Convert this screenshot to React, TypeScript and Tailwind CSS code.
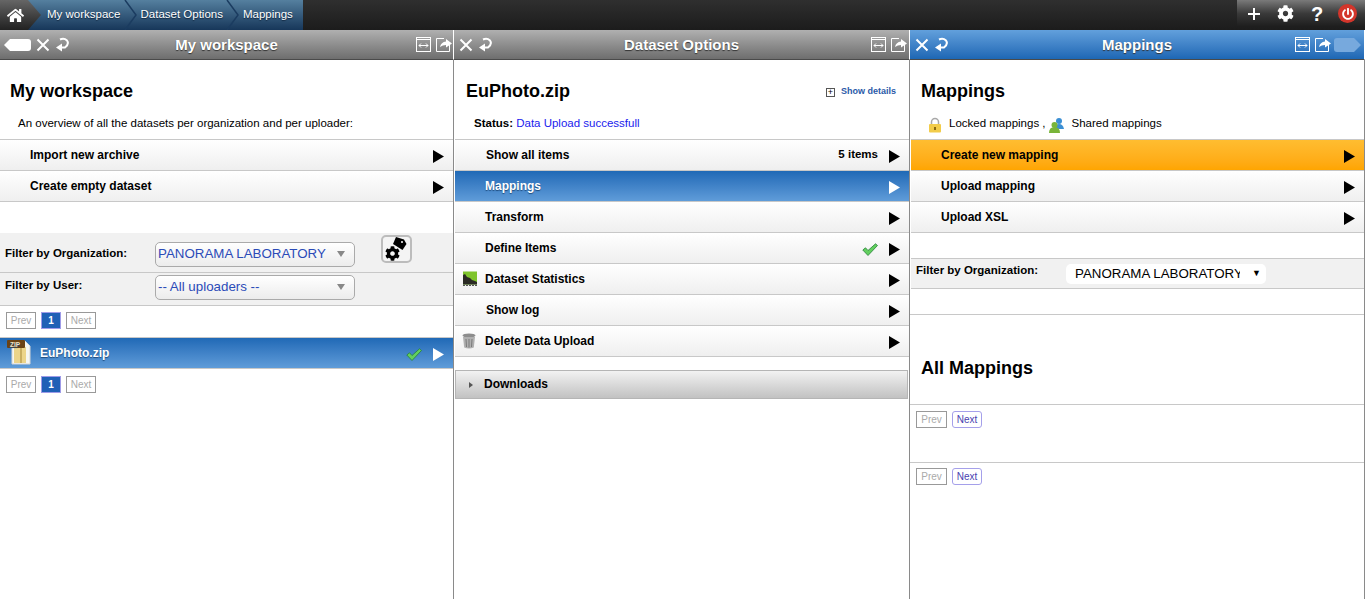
import { FaCog, FaHome, FaPowerOff } from "react-icons/fa";

const crumbs = ["My workspace", "Dataset Options", "Mappings"];

function TopBar() {
  return (
    <div className="flex h-[30px] justify-between bg-gradient-to-b from-[#2f2f2f] to-[#1c1c1c]">
      <div className="flex h-[30px] bg-gradient-to-b from-[#55809f] to-[#17375a] pr-[10px]">
        <div className="z-10 flex w-[41px] items-center bg-gradient-to-b from-[#666666] to-[#222222] pl-[7px] text-white [clip-path:polygon(0_0,28px_0,41px_50%,28px_100%,0_100%)]">
          <FaHome size={17} />
        </div>
        {crumbs.map((crumb, i) => (
          <div key={crumb} className="flex items-center">
            <span className={`text-[11.5px] text-white [text-shadow:0_1px_1px_#10263f] ${i === 0 ? "ml-[6px]" : ""}`}>{crumb}</span>
            {i < crumbs.length - 1 && (
              <svg width="20" height="30" viewBox="0 0 20 30">
                <polyline points="4,0 15,15 4,30" fill="none" stroke="#1b3c60" strokeWidth="1.5" />
              </svg>
            )}
          </div>
        ))}
      </div>
      <div className="flex h-[27px] w-[128px] items-center bg-gradient-to-b from-[#7a7a7a] via-[#3a3a3a] to-[#1d1d1d] pl-[9px] text-white">
        <svg width="14" height="14" viewBox="0 0 14 14" className="ml-[1px]">
          <path d="M7 1v12M1 7h12" stroke="#fff" strokeWidth="2" />
        </svg>
        <FaCog size={17} className="ml-[16px]" />
        <span className="ml-[17px] text-[20px] leading-none font-bold">?</span>
        <span className="ml-[15px] flex h-[19px] w-[19px] items-center justify-center rounded-full bg-[#d3352b] text-white">
          <FaPowerOff size={12} />
        </span>
      </div>
    </div>
  );
}

function TagShape({ fill }: { fill: string }) {
  return (
    <svg width="27" height="14" viewBox="0 0 27 14">
      <path d={fill === "#fff" ? "M0 7 6 1h18q3 0 3 3v6q0 3-3 3H6z" : "M0 3q0-3 3-3h17l7 7-7 7H3q-3 0-3-3z"} fill={fill} />
    </svg>
  );
}

function CloseReload() {
  return (
    <>
      <svg width="14" height="14" viewBox="0 0 14 14">
        <path d="M1.5 1.5l11 11M12.5 1.5l-11 11" stroke="#fff" strokeWidth="2" />
      </svg>
      <svg width="15" height="15" viewBox="0 0 15 15" className="ml-[5px]">
        <path d="M5 2.500Q9 .5 12 3.500 14.500 7 10 10.500H7" fill="none" stroke="#fff" strokeWidth="2" />
        <path d="M7 6.500v8l-6-4z" fill="#fff" />
      </svg>
    </>
  );
}

function SizeIcons() {
  return (
    <>
      <svg width="15" height="15" viewBox="0 0 15 15">
        <rect x="0.5" y="0.5" width="14" height="14" fill="none" stroke="#fff" />
        <path d="M0 2.500h15" stroke="#fff" />
        <path d="M3 8.500h9M3 8.500l2-2M3 8.500l2 2M12 8.500l-2-2M12 8.500l-2 2" stroke="#fff" fill="none" />
      </svg>
      <svg width="16" height="16" viewBox="0 0 16 16" className="ml-[5px]">
        <path d="M8 1.500H.5v13h13V8" fill="none" stroke="#fff" />
        <path d="M4 10q1-5 6-5.500V2l6 4.500-6 4V8q-3.500 0-6 2z" fill="#fff" />
      </svg>
    </>
  );
}

function TitleBar({ title, active, first }: { title: string; active?: boolean; first?: boolean }) {
  const pad = active ? "pr-[3px]" : first ? "pr-[1px]" : "pr-[2px]";
  return (
    <div
      className={`relative -mr-px flex h-[30px] items-center border-r border-b border-r-white border-b-[#4a4a4a] ${pad} ${
        active ? "bg-gradient-to-b from-[#62a0dc] to-[#1d67b4]" : "bg-gradient-to-b from-[#b0b0b0] to-[#6e6e6e]"
      } ${first ? "pl-[4px]" : "pl-[5px]"}`}
    >
      {first && (
        <span className="mr-[5px] flex">
          <TagShape fill="#fff" />
        </span>
      )}
      <CloseReload />
      <span className="absolute inset-x-0 mt-[1px] text-center text-[15px] font-bold text-white [text-shadow:0_1px_1px_#333333]">{title}</span>
      <span className="ml-auto flex items-center">
        <SizeIcons />
        {active && (
          <span className="ml-[3px] flex">
            <TagShape fill="#77a9dd" />
          </span>
        )}
      </span>
    </div>
  );
}

function Arrow({ white }: { white?: boolean }) {
  return (
    <svg width="11" height="13" viewBox="0 0 11 13" className="ml-[11px] mt-[2px]">
      <path d="M0 0l11 6.500L0 13z" fill={white ? "#fff" : "#000"} />
    </svg>
  );
}

function Check() {
  return (
    <svg width="16" height="13" viewBox="0 0 16 13" className="mt-[3px]">
      <path d="M.8 7l2.700-2.200 2.500 2.700L13.500.8l2 1.700L6 12.500z" fill="#62cf5e" stroke="#27803a" strokeWidth="0.8" />
    </svg>
  );
}

function StatsIcon() {
  return (
    <svg width="16" height="15" viewBox="0 0 16 15">
      <rect x="1" y="0.500" width="14" height="13" fill="#7fc42c" />
      <path d="M1 13.500V4l2-1 2 3 3 1 2 2 3 1 2 1v2.500z" fill="#2b2b24" />
      <path d="M1 14.500h14" stroke="#555555" strokeDasharray="2 1" />
    </svg>
  );
}

function BinIcon() {
  return (
    <svg width="14" height="16" viewBox="0 0 14 16">
      <ellipse cx="7" cy="2.500" rx="6.500" ry="2" fill="#8d8d8d" />
      <path d="M1 4h12l-1.200 10.500q-4.800 2-9.600 0z" fill="#b0b0b0" />
      <path d="M4 6l.5 8M7 6v8.500M10 6l-.5 8" stroke="#7a7a7a" />
    </svg>
  );
}

type RowProps = {
  label: string;
  tone?: "plain" | "blue" | "orange";
  icon?: React.ReactNode;
  end?: React.ReactNode;
  labelPad?: string;
};

function MenuRow({ label, tone = "plain", icon, end, labelPad = "pl-[30px]" }: RowProps) {
  const bg = {
    plain: "bg-gradient-to-b from-white to-[#efefef] text-black",
    blue: "bg-gradient-to-b from-[#1f69b6] to-[#5f9cd9] text-white [text-shadow:0_1px_1px_#1d4a7c]",
    orange: "bg-gradient-to-b from-[#ffbd30] to-[#ffa500] text-black",
  }[tone];
  return (
    <div className={`relative flex h-[31px] items-center border-b border-b-[#c8c8c8] pr-[9px] ${bg} ${labelPad}`}>
      {icon && <span className="absolute left-[7px] top-[7px] flex">{icon}</span>}
      <span className="mb-[1px] text-[12px] font-bold">{label}</span>
      <span className="ml-auto flex items-center">
        {end}
        <Arrow white={tone === "blue"} />
      </span>
    </div>
  );
}

function Pager({ numbered, activeNext }: { numbered?: boolean; activeNext?: boolean }) {
  return (
    <div className="flex items-center gap-[5px] text-[10px]">
      <span className={`flex h-[17px] items-center justify-center border border-[#999999] text-[#aaaaaa] ${activeNext ? "w-[31px]" : "w-[30px]"}`}>Prev</span>
      {numbered && <span className="flex h-[17px] w-[20px] items-center justify-center border border-[#9e9be8] bg-[#1f60b6] font-bold text-white">1</span>}
      <span
        className={`flex h-[17px] w-[30px] items-center justify-center ${
          activeNext ? "rounded-[3px] border border-[#a5a0ea] text-[#4a3fb0]" : "border border-[#999999] text-[#aaaaaa]"
        }`}
      >
        Next
      </span>
    </div>
  );
}

function FakeSelect({ label }: { label: string }) {
  return (
    <div className="flex h-[25px] w-[200px] items-center justify-between rounded-[5px] border border-[#aaaaaa] bg-gradient-to-b from-white to-[#ececec] pl-[2px] pr-[9px] text-[13.33px] text-[#2b4bb8]">
      <span>{label}</span>
      <span className="h-0 w-0 border-x-[4px] border-t-[6px] border-x-transparent border-t-[#888888]" />
    </div>
  );
}

function ZipIcon() {
  return (
    <svg width="26" height="26" viewBox="0 0 26 26">
      <path d="M6 2h13l5 5v18H6z" fill="#f6f6f2" stroke="#d5d5d5" />
      <rect x="8" y="8" width="12" height="16" fill="#ecd48a" />
      <rect x="14" y="8" width="2" height="16" fill="#c9ae62" />
      <rect x="1" y="1" width="18" height="8" rx="1" fill="#6b4214" />
      <text x="4" y="8" fontSize="6.500" fontWeight="bold" fill="#f2e2c2" fontFamily="Liberation Sans">ZIP</text>
    </svg>
  );
}

function TagGearButton() {
  return (
    <div className="relative ml-[26px] mt-[-11px] h-[28px] w-[31px] rounded-[5px] border-2 border-[#bcbcbc] bg-[#f4f4f4]">
      <svg width="16" height="14" viewBox="0 0 16 14" className="absolute left-[8px] top-0">
        <path d="M5 0l8 2.500 2.500 4.500-4 6L2 7z" fill="#000" />
        <circle cx="11" cy="5" r="1" fill="#fff" />
      </svg>
      <FaCog size={15} className="absolute left-[2px] top-[9px] text-black" />
    </div>
  );
}

function WorkspacePanel() {
  return (
    <section className="w-[454px] border-r border-r-[#8a8a8a]">
      <TitleBar title="My workspace" first />
      <h1 className="pl-[10px] pt-[20px] text-[18px] leading-[22px] font-bold">My workspace</h1>
      <p className="pl-[18px] pt-[14px] text-[11.5px] leading-[14px]">An overview of all the datasets per organization and per uploader:</p>
      <div className="mt-[9px] border-t border-t-[#c8c8c8]">
        <MenuRow label="Import new archive" />
        <MenuRow label="Create empty dataset" />
      </div>
      <div className="mt-[31px] border-b border-b-[#c8c8c8] bg-[#f1f1f1]">
        <div className="flex h-[39px] items-center pl-[5px] pt-[3px]">
          <span className="w-[150px] text-[11.5px] font-bold">Filter by Organization:</span>
          <FakeSelect label="PANORAMA LABORATORY" />
          <TagGearButton />
        </div>
        <div className="flex h-[33px] items-center border-t border-t-[#c8c8c8] pb-[4px] pl-[5px]">
          <span className="mb-[2px] w-[150px] text-[11.5px] font-bold">Filter by User:</span>
          <FakeSelect label="-- All uploaders --" />
        </div>
      </div>
      <div className="px-[6px] pb-[8px] pt-[6px]">
        <Pager numbered />
      </div>
      <div className="border-t border-t-[#c8c8c8]">
        <MenuRow
          tone="blue"
          label="EuPhoto.zip"
          labelPad="pl-[40px]"
          icon={
            <span className="-ml-[1px] -mt-[6px] flex">
              <ZipIcon />
            </span>
          }
          end={<Check />}
        />
      </div>
      <div className="px-[6px] pt-[7px]">
        <Pager numbered />
      </div>
    </section>
  );
}

function DatasetPanel() {
  return (
    <section className="w-[456px] border-r border-r-[#8a8a8a]">
      <TitleBar title="Dataset Options" />
      <div className="flex items-center justify-between pl-[12px] pr-[13px] pt-[20px]">
        <h1 className="text-[18px] leading-[22px] font-bold">EuPhoto.zip</h1>
        <span className="mt-[1px] flex items-center text-[9px] font-bold text-[#2b5aa8]">
          <span className="mr-[6px] mt-[2px] flex h-[9px] w-[9px] items-center justify-center border border-[#555555] text-[9px] leading-none font-normal text-black">+</span>
          Show details
        </span>
      </div>
      <p className="pl-[20px] pt-[14px] text-[11.5px] leading-[14px]">
        <b>Status:</b> <span className="text-[#1a1aee]">Data Upload successfull</span>
      </p>
      <div className="ml-px mt-[9px] border-t border-t-[#c8c8c8]">
        <MenuRow label="Show all items" labelPad="pl-[31px]" end={<span className="text-[11.5px] font-bold">5 items</span>} />
        <MenuRow label="Mappings" tone="blue" labelPad="pl-[30px]" />
        <MenuRow label="Transform" labelPad="pl-[30px]" />
        <MenuRow label="Define Items" labelPad="pl-[30px]" end={<Check />} />
        <MenuRow label="Dataset Statistics" labelPad="pl-[30px]" icon={<StatsIcon />} />
        <MenuRow label="Show log" labelPad="pl-[31px]" />
        <MenuRow label="Delete Data Upload" labelPad="pl-[30px]" icon={<BinIcon />} />
      </div>
      <div className="ml-px mr-[1px] mt-[13px] flex h-[29px] items-center border border-[#b5b5b5] bg-gradient-to-b from-[#f2f2f2] to-[#c2c2c2] pl-[13px]">
        <span className="h-0 w-0 border-y-[3.5px] border-l-[4px] border-y-transparent border-l-[#555555]" />
        <span className="mb-[2px] ml-[11px] text-[12px] font-bold">Downloads</span>
      </div>
    </section>
  );
}

function LockIcon() {
  return (
    <svg width="14" height="16" viewBox="0 0 14 16">
      <path d="M3.500 8V5a3.500 3.500 0 0 1 7 0v3" fill="none" stroke="#a8a8a8" strokeWidth="1.5" />
      <rect x="1" y="7" width="12" height="8.500" rx="1" fill="#f2cc4a" />
      <rect x="6" y="10" width="2" height="3" fill="#8a6a10" />
    </svg>
  );
}

function SharedIcon() {
  return (
    <svg width="16" height="17" viewBox="0 0 16 17">
      <circle cx="10" cy="4" r="3" fill="#3b8fd4" />
      <path d="M6 12q0-5 4-5t5 5z" fill="#3b8fd4" />
      <circle cx="5.500" cy="8" r="3" fill="#79b53a" />
      <path d="M0 16q0-6 5.500-6T11 16z" fill="#79b53a" />
    </svg>
  );
}

function MappingsPanel() {
  return (
    <section className="w-[455px] border-r border-r-[#8a8a8a]">
      <TitleBar title="Mappings" active />
      <h1 className="pl-[11px] pt-[20px] text-[18px] leading-[22px] font-bold">Mappings</h1>
      <div className="mt-[15px] flex h-[14px] items-center pl-[18px] text-[11.5px]">
        <span className="mt-[2px] flex">
          <LockIcon />
        </span>
        <span className="ml-[7px]">Locked mappings ,</span>
        <span className="ml-[3px] mt-[3px] flex">
          <SharedIcon />
        </span>
        <span className="ml-[7px]">Shared mappings</span>
      </div>
      <div className="ml-px mt-[8px] border-t border-t-[#c8c8c8]">
        <MenuRow label="Create new mapping" tone="orange" />
        <MenuRow label="Upload mapping" />
        <MenuRow label="Upload XSL" />
      </div>
      <div className="ml-px mt-[25px] flex h-[31px] border-y border-y-[#c8c8c8] bg-[#f1f1f1] pl-[5px]">
        <span className="w-[150px] pt-[3px] text-[11.5px] font-bold">Filter by Organization:</span>
        <div className="mt-[5px] flex h-[20px] w-[200px] items-center rounded-[5px] bg-white pl-[9px] text-[13.33px]">
          <span className="w-[165px] overflow-hidden whitespace-nowrap">PANORAMA LABORATORY</span>
          <span className="ml-[12px] text-[9px]">▼</span>
        </div>
      </div>
      <div className="mt-[25px] border-t border-t-[#c8c8c8] pl-[11px] pt-[42px]">
        <h2 className="text-[18px] leading-[22px] font-bold">All Mappings</h2>
      </div>
      <div className="mt-[25px] h-[58px] border-t border-t-[#c8c8c8] pl-[6px] pt-[6px]">
        <Pager activeNext />
      </div>
      <div className="border-t border-t-[#c8c8c8] pl-[6px] pt-[5px]">
        <Pager activeNext />
      </div>
    </section>
  );
}

export default function App() {
  return (
    <div className="h-[599px] w-[1365px] overflow-hidden bg-white font-['Liberation_Sans',Arial,sans-serif] text-black">
      <TopBar />
      <div className="flex h-[569px] [&>section]:flex-none">
        <WorkspacePanel />
        <DatasetPanel />
        <MappingsPanel />
      </div>
    </div>
  );
}
